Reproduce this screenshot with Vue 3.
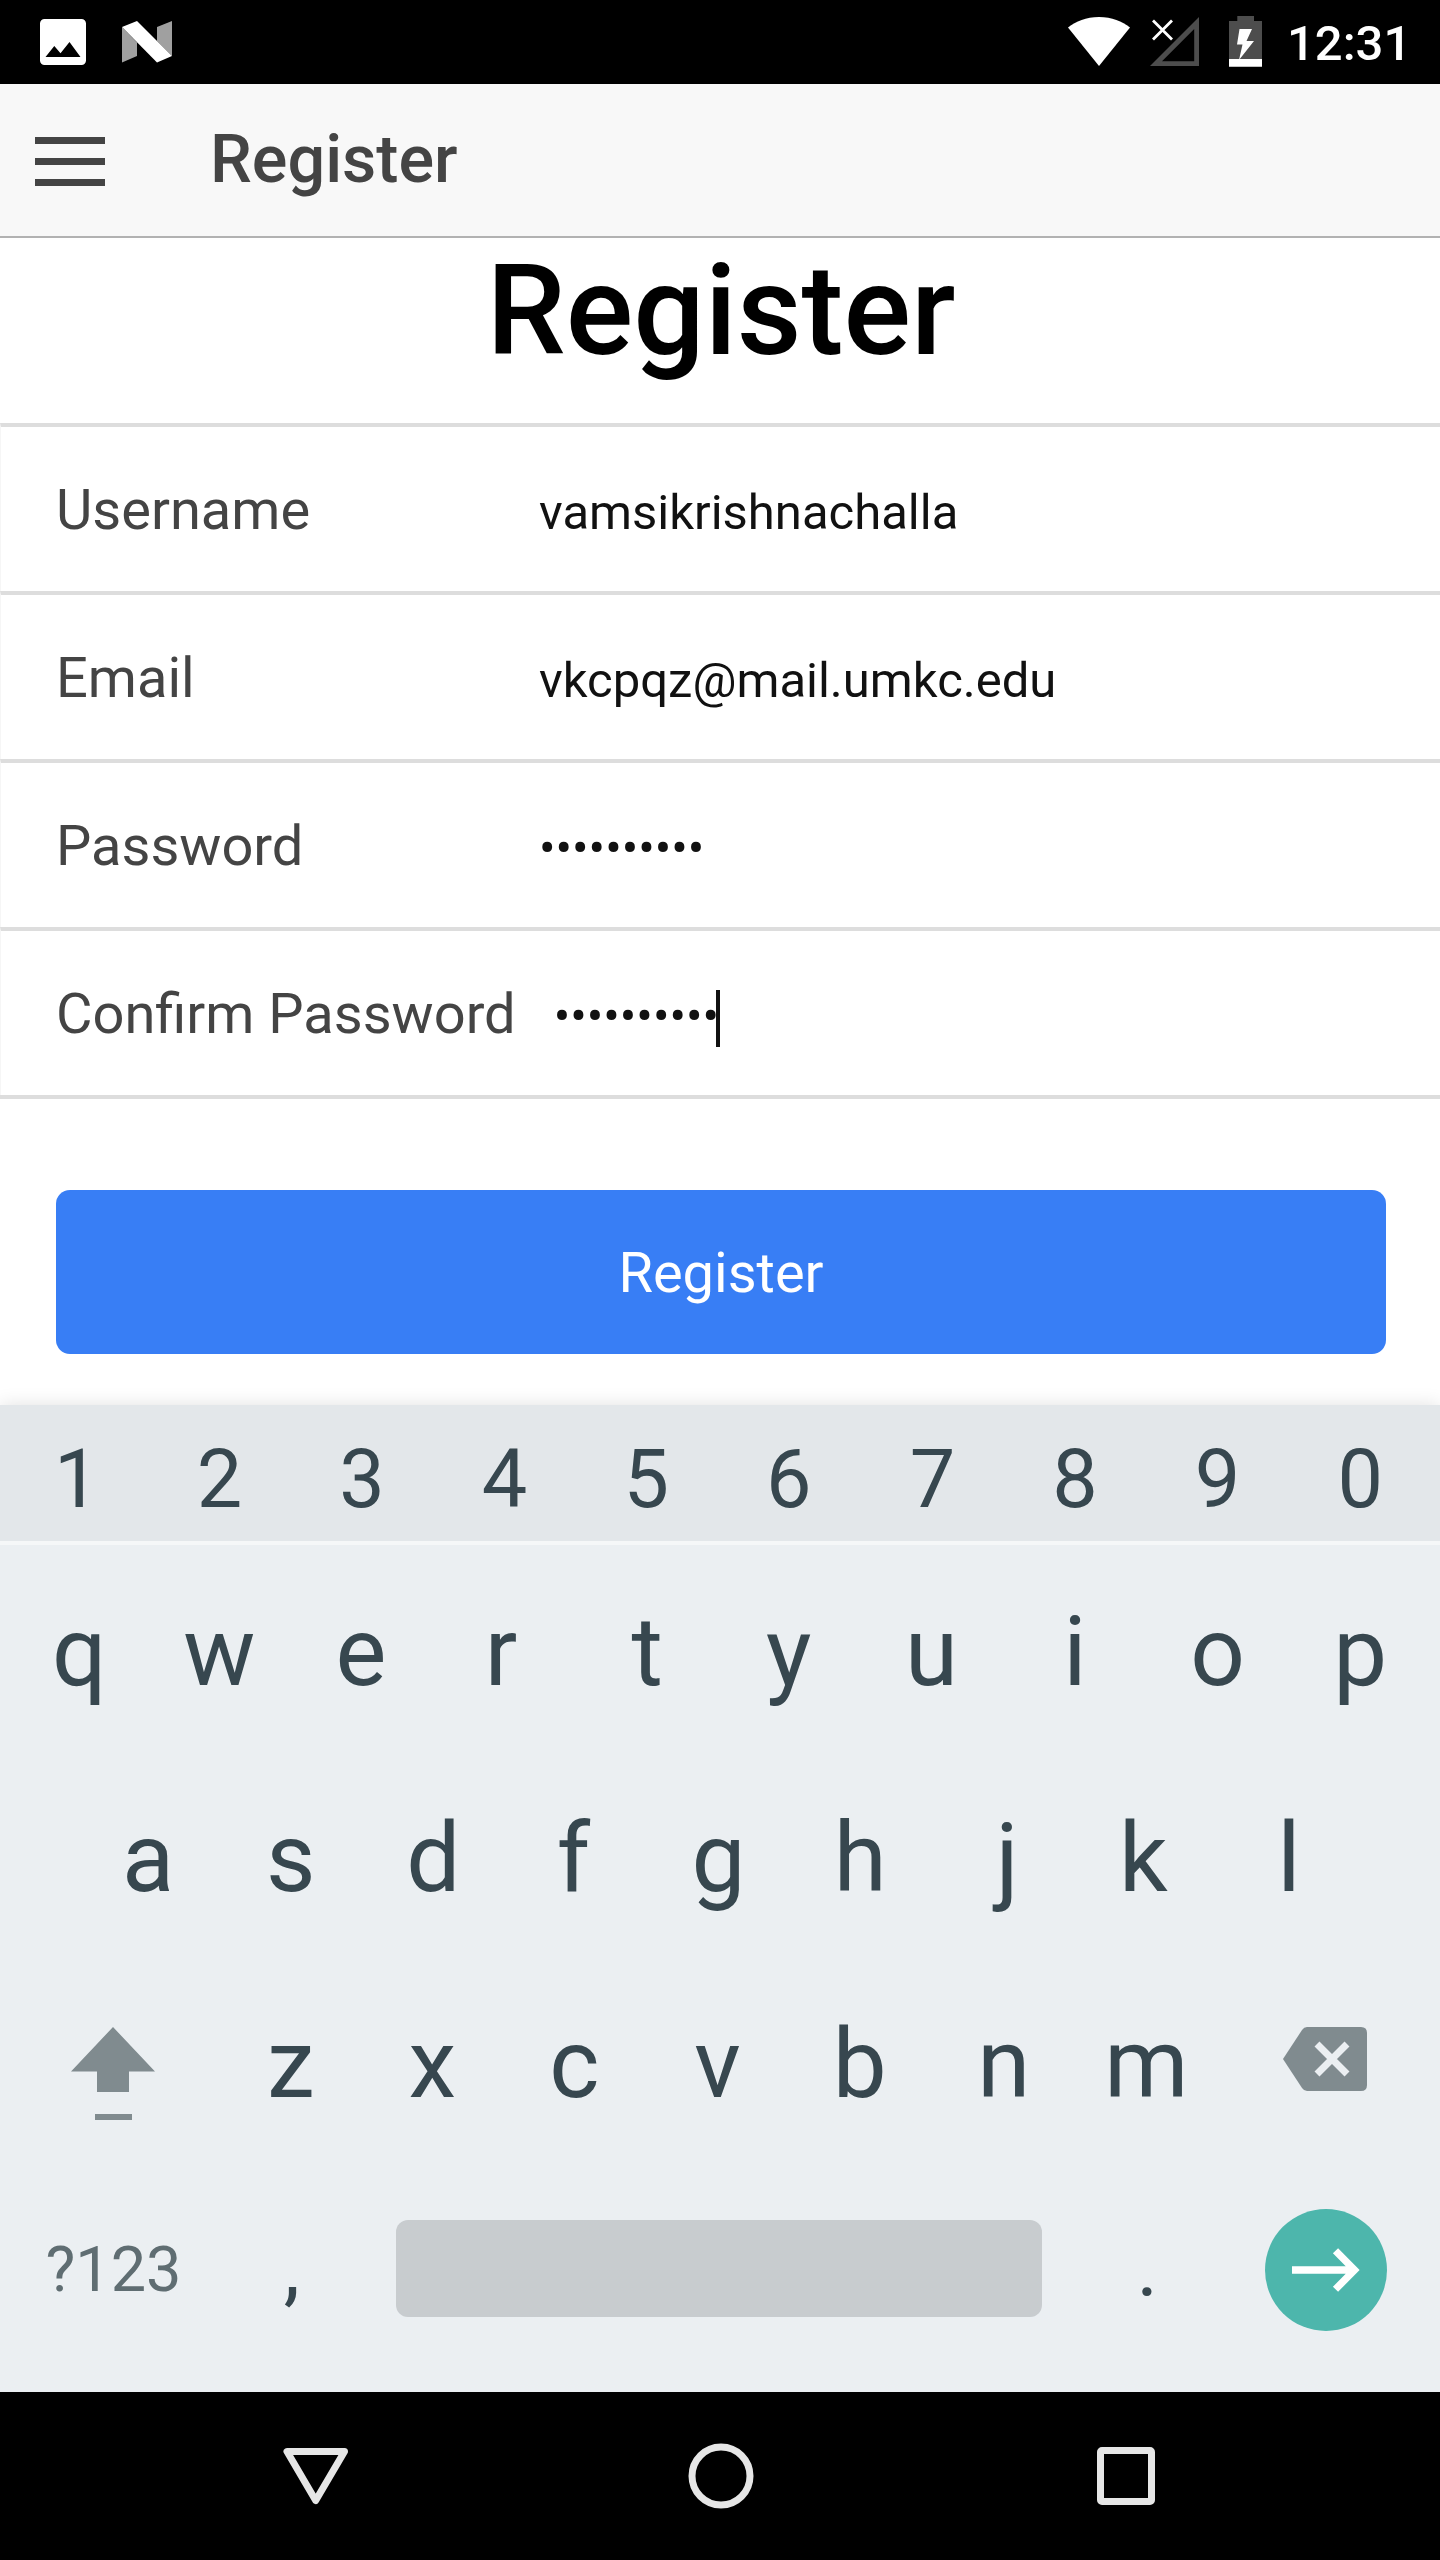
<script setup>
const fields = [
  { label: 'Username', value: 'vamsikrishnachalla' },
  { label: 'Email', value: 'vkcpqz@mail.umkc.edu' },
  { label: 'Password', value: '••••••••••' },
  { label: 'Confirm Password', value: '••••••••••', focused: true },
]
const digits = [...'1234567890']
const top = [...'qwertyuiop']
const home = [...'asdfghjkl']
const bottom = [...'zxcvbnm']

const shifts = { q: 2.5, e: -1, r: -3.5, y: -1, u: -1, f: -2.5, h: -1, j: 3.5, k: -3, x: -1, c: -1.5, v: -1, b: -1.5, 5: -1, 6: -1 }
const nudge = (k) => (shifts[k] ? { transform: `translateX(${shifts[k]}px)` } : null)
</script>

<template>
  <div class="screen">
    <div class="status">
      <svg class="notif" width="180" height="84" viewBox="0 0 180 84">
        <path fill="#fff" fill-rule="evenodd" d="M44.500 19h37a4.500 4.500 0 0 1 4.500 4.500v37a4.500 4.500 0 0 1-4.500 4.500h-37a4.500 4.500 0 0 1-4.500-4.500v-37a4.500 4.500 0 0 1 4.500-4.500zM45.500 57h35L69.500 42l-9 11.200-6.200-7.200z" />
        <path fill="#a0a0a0" d="M122 27l15 15.500V56l-15 6.500zM157 27l15-6v35l-15-15z" />
        <path fill="#fff" d="M122 27l15-6 35 35-15 6.500z" />
      </svg>
      <div class="indicators">
        <svg width="210" height="84" viewBox="1060 0 210 84">
          <path fill="#fff" d="M1099 66l-31-38.500c8-6 18-10.500 31-10.500s23 4.500 31 10.500z" />
          <path fill="#4d4d4d" fill-rule="evenodd" d="M1150 66h49V17zM1162 61.200h32.200V29z" />
          <path stroke="#fff" stroke-width="2.800" d="M1153 20.500l19 19M1172 20.500l-19 19" />
          <path fill="#4d4d4d" d="M1229 21h8.300v-5h16.700v5h8v39h-33z" />
          <path fill="#fff" d="M1229 59h33v7.700h-33zM1239.500 29h12.500l-5.500 12h7.500l-15 19 3.500-15.500h-5.500z" />
        </svg>
        <span class="clock">12:31</span>
      </div>
    </div>

    <header class="bar">
      <div class="menu"><i></i><i></i><i></i></div>
      <div class="bar-title">Register</div>
    </header>

    <main class="content">
      <h1>Register</h1>
      <div class="list">
        <div v-for="f in fields" :key="f.label" class="item">
          <span class="label">{{ f.label }}</span>
          <span class="value">{{ f.value }}</span>
          <span v-if="f.focused" class="caret"></span>
        </div>
      </div>
      <div class="submit">Register</div>
    </main>

    <div class="keyboard">
      <div class="row digits"><span v-for="k in digits" :key="k" class="key" :style="nudge(k)">{{ k }}</span></div>
      <div class="row"><span v-for="k in top" :key="k" class="key" :style="nudge(k)">{{ k }}</span></div>
      <div class="row"><span v-for="k in home" :key="k" class="key" :style="nudge(k)">{{ k }}</span></div>
      <div class="row">
        <span class="wide">
          <svg class="shift" width="84" height="94" viewBox="0 0 84 94">
            <path fill="#808b8f" d="M42 0l42 44.500H58V65H26V44.500H0zM24 87h37v6H24z" />
          </svg>
        </span>
        <span v-for="k in bottom" :key="k" class="key" :style="nudge(k)">{{ k }}</span>
        <span class="wide">
          <svg class="erase" width="84" height="64" viewBox="0 0 84 64">
            <path fill="#808b8f" d="M0 32L19 3q2-3 5-3h54q6 0 6 6v52q0 6-6 6H24q-3 0-5-3z" />
            <path stroke="#ebeff2" stroke-width="7" d="M34 17l30 30M64 17L34 47" />
          </svg>
        </span>
      </div>
      <div class="row last">
        <span class="wide symbols">?123</span>
        <span class="key mark">,</span>
        <span class="space-slot"><span class="space"></span></span>
        <span class="key mark">.</span>
        <span class="wide">
          <span class="go">
            <svg width="68" height="44" viewBox="0 0 68 44">
              <path fill="none" stroke="#fff" stroke-width="7.300" d="M0 22h60M43.500 2.800L62.500 22 43.500 41.200" />
            </svg>
          </span>
        </span>
      </div>
    </div>

    <nav class="nav">
      <svg width="66" height="68" viewBox="0 0 66 68">
        <path fill="none" stroke="#e6e6e6" stroke-width="7" stroke-linejoin="round" d="M4 9.500h57.500L32.700 58.500z" />
      </svg>
      <svg width="66" height="68" viewBox="0 0 66 68">
        <circle cx="33" cy="34" r="29" fill="none" stroke="#e6e6e6" stroke-width="7" />
      </svg>
      <svg width="66" height="68" viewBox="0 0 66 68">
        <rect x="7.500" y="8.500" width="51" height="51" rx="1.500" fill="none" stroke="#e6e6e6" stroke-width="7" />
      </svg>
    </nav>
  </div>
</template>

<style>
body { margin: 0; }
</style>

<style scoped>
.screen {
  width: 1440px;
  height: 2560px;
  display: flex;
  flex-direction: column;
  overflow: hidden;
  background: #fff;
  font-family: Roboto, sans-serif;
}
.screen svg { display: block; flex: none; }
.status {
  height: 84px;
  background: #000;
  display: flex;
  justify-content: space-between;
}
.indicators { display: flex; padding-right: 33px; }
.indicators svg { margin-right: 17px; }
.clock {
  width: 120px;
  color: #fff;
  font-size: 49px;
  font-weight: 500;
  line-height: 88px;
  white-space: nowrap;
}
.bar {
  box-sizing: border-box;
  height: 154px;
  border-bottom: 2px solid #b2b2b2;
  background: #f8f8f8;
  display: flex;
  align-items: center;
  padding-left: 35px;
  color: #444;
}
.menu {
  display: flex;
  flex-direction: column;
  gap: 14px;
  width: 70px;
  margin: 3px 105px 0 0;
}
.menu i { height: 7px; background: #444; }
.bar-title {
  height: 152px;
  font-size: 66.5px;
  font-weight: 500;
  line-height: 150px;
}
.content {
  height: 1167px;
  display: flex;
  flex-direction: column;
}
h1 {
  margin: 0;
  height: 185px;
  padding-left: 2px;
  font-size: 126px;
  line-height: 146px;
  font-weight: 500;
  text-align: center;
  color: #000;
}
.list { border-bottom: 4px solid #ddd; }
.item {
  box-sizing: border-box;
  height: 168px;
  border-top: 4px solid #ddd;
  border-left: 1px solid #f6f6f6;
  padding-left: 55px;
  display: flex;
  align-items: flex-start;
}
.label {
  min-width: 445px;
  margin-right: 38px;
  font-size: 56px;
  line-height: 166px;
  color: #444;
  white-space: nowrap;
}
.value { font-size: 49px; line-height: 171px; color: #111; }
.caret {
  width: 4px;
  height: 57px;
  margin: 59px 0 0 -3px;
  background: #111;
}
.submit {
  width: 1330px;
  height: 164px;
  margin: 91px 0 0 56px;
  border-radius: 14px;
  background: #387ef5;
  color: #fff;
  font-size: 56px;
  line-height: 167px;
  text-align: center;
}
.keyboard {
  height: 987px;
  background: #ebeff2;
  box-shadow: 0 0 18px rgba(0, 0, 0, 0.12);
  color: #37474f;
}
.row {
  height: 206px;
  display: flex;
  justify-content: center;
  padding-right: 3px;
  font-size: 96px;
  line-height: 215px;
}
.row.digits {
  height: 136px;
  background: #e3e7ea;
  border-bottom: 4px solid #f5f7f8;
  font-size: 81px;
  line-height: 149px;
}
.key { width: 142.6px; text-align: center; }
.wide {
  box-sizing: border-box;
  width: 213.9px;
  height: 206px;
  padding-left: 2px;
  display: flex;
  align-items: center;
  justify-content: center;
}
.wide .shift { margin-top: 28px; }
.wide .erase { margin: -2px 2px 0 0; }
.last .wide, .space-slot { padding-top: 7px; }
.symbols { font-size: 63px; line-height: 206px; color: #5f6d72; }
.mark { padding-left: 1px; margin-right: -1px; font-size: 82px; line-height: 211px; }
.space-slot {
  box-sizing: border-box;
  width: 713px;
  height: 206px;
  display: flex;
  align-items: center;
  justify-content: center;
}
.space {
  width: 646px;
  height: 97px;
  margin-top: -2px;
  border-radius: 12px;
  background: #c8cccf;
}
.go {
  width: 122px;
  height: 122px;
  border-radius: 50%;
  background: #4db6ac;
  display: flex;
  align-items: center;
  justify-content: center;
}
.nav {
  height: 168px;
  padding-left: 1px;
  background: #000;
  display: flex;
  align-items: center;
  justify-content: center;
  gap: 339px;
}
</style>
